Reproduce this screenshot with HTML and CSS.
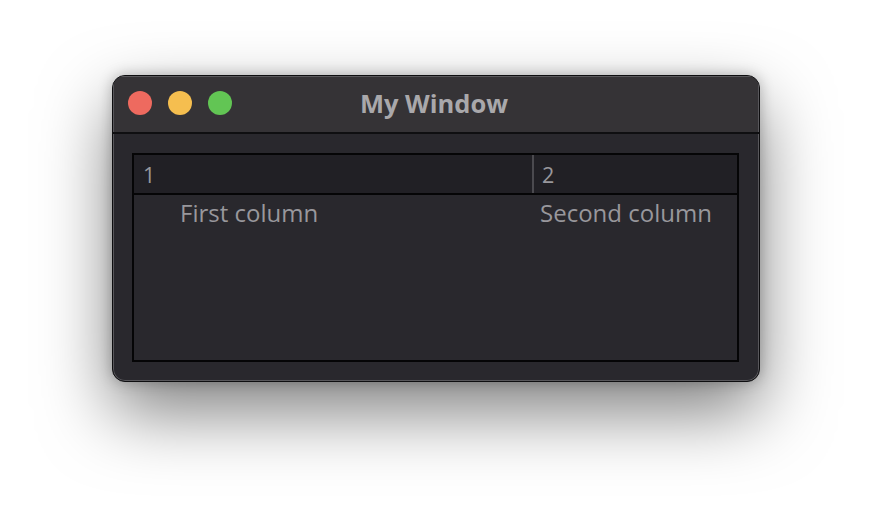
FILE: index.html
```html
<!DOCTYPE html>
<html>
<head>
<meta charset="utf-8">
<link rel="stylesheet" href="styles.css">
</head>
<body>
<div class="stage">
  <div class="window">
    <div class="titlebar">
      <div class="lights">
        <span class="light red"></span>
        <span class="light yellow"></span>
        <span class="light green"></span>
      </div>
      <div class="title">My Window</div>
    </div>
    <div class="content">
      <div class="table">
        <div class="thead">
          <div class="th th1">1</div>
          <div class="th th2">2</div>
        </div>
        <div class="row">
          <div class="td td1">First column</div>
          <div class="td td2">Second column</div>
        </div>
      </div>
    </div>
  </div>
</div>
</body>
</html>
```
FILE: styles.css
```css
html, body {
  margin: 0;
  padding: 0;
  background: #ffffff;
  width: 872px;
  height: 530px;
  overflow: hidden;
}
.stage {
  padding: 75px 0 0 112px;
  font-family: "Open Sans", "DejaVu Sans", sans-serif;
}
.window {
  width: 648px;
  height: 307px;
  box-sizing: border-box;
  border-radius: 13px;
  background: #29282d;
  border: 1px solid #0e0e10;
  box-shadow: inset 0 0 0 1px #58575b, 0 30px 70px rgba(0,0,0,0.5), 0 0 14px rgba(0,0,0,0.25);
  display: flex;
  flex-direction: column;
  overflow: hidden;
}
.titlebar {
  height: 56px;
  flex: none;
  background: #353336;
  border-bottom: 2px solid #0f0f11;
  display: flex;
  align-items: center;
  position: relative;
  box-shadow: inset 0 1px 0 #5a595c, inset 1px 0 0 #58575b, inset -1px 0 0 #58575b;
}
.lights {
  display: flex;
  gap: 16px;
  padding-left: 15px;
  padding-bottom: 2px;
}
.light {
  width: 24px;
  height: 24px;
  border-radius: 50%;
  display: block;
}
.red { background: #ee6a5f; }
.yellow { background: #f5be4f; }
.green { background: #62c554; }
.title {
  position: absolute;
  left: 0;
  right: 0;
  top: 0;
  bottom: 0;
  display: flex;
  align-items: center;
  justify-content: center;
  font-weight: 700;
  font-size: 25.5px;
  color: #a9a8ab;
  padding-bottom: 3px;
  padding-right: 4px;
}
.content {
  flex: 1;
  padding: 19px 20px 19px 19px;
  display: flex;
}
.table {
  flex: 1;
  border: 2px solid #050506;
  display: flex;
  flex-direction: column;
  background: #29282d;
}
.thead {
  height: 38px;
  background: #212025;
  border-bottom: 2px solid #050506;
  display: flex;
}
.th {
  font-size: 21.5px;
  color: #98979c;
  display: flex;
  align-items: center;
  padding-top: 0;
  box-sizing: border-box;
}
.th1 {
  width: 400px;
  padding-left: 9px;
  border-right: 2px solid #4b4a4f;
}
.th2 {
  flex: 1;
  padding-left: 8px;
}
.row {
  display: flex;
  height: 35px;
  align-items: center;
}
.td {
  font-size: 24px;
  color: #98979c;
}
.td1 {
  width: 360px;
  padding-left: 46px;
}
.td2 {
  flex: 1;
  padding-left: 0;
}
```
